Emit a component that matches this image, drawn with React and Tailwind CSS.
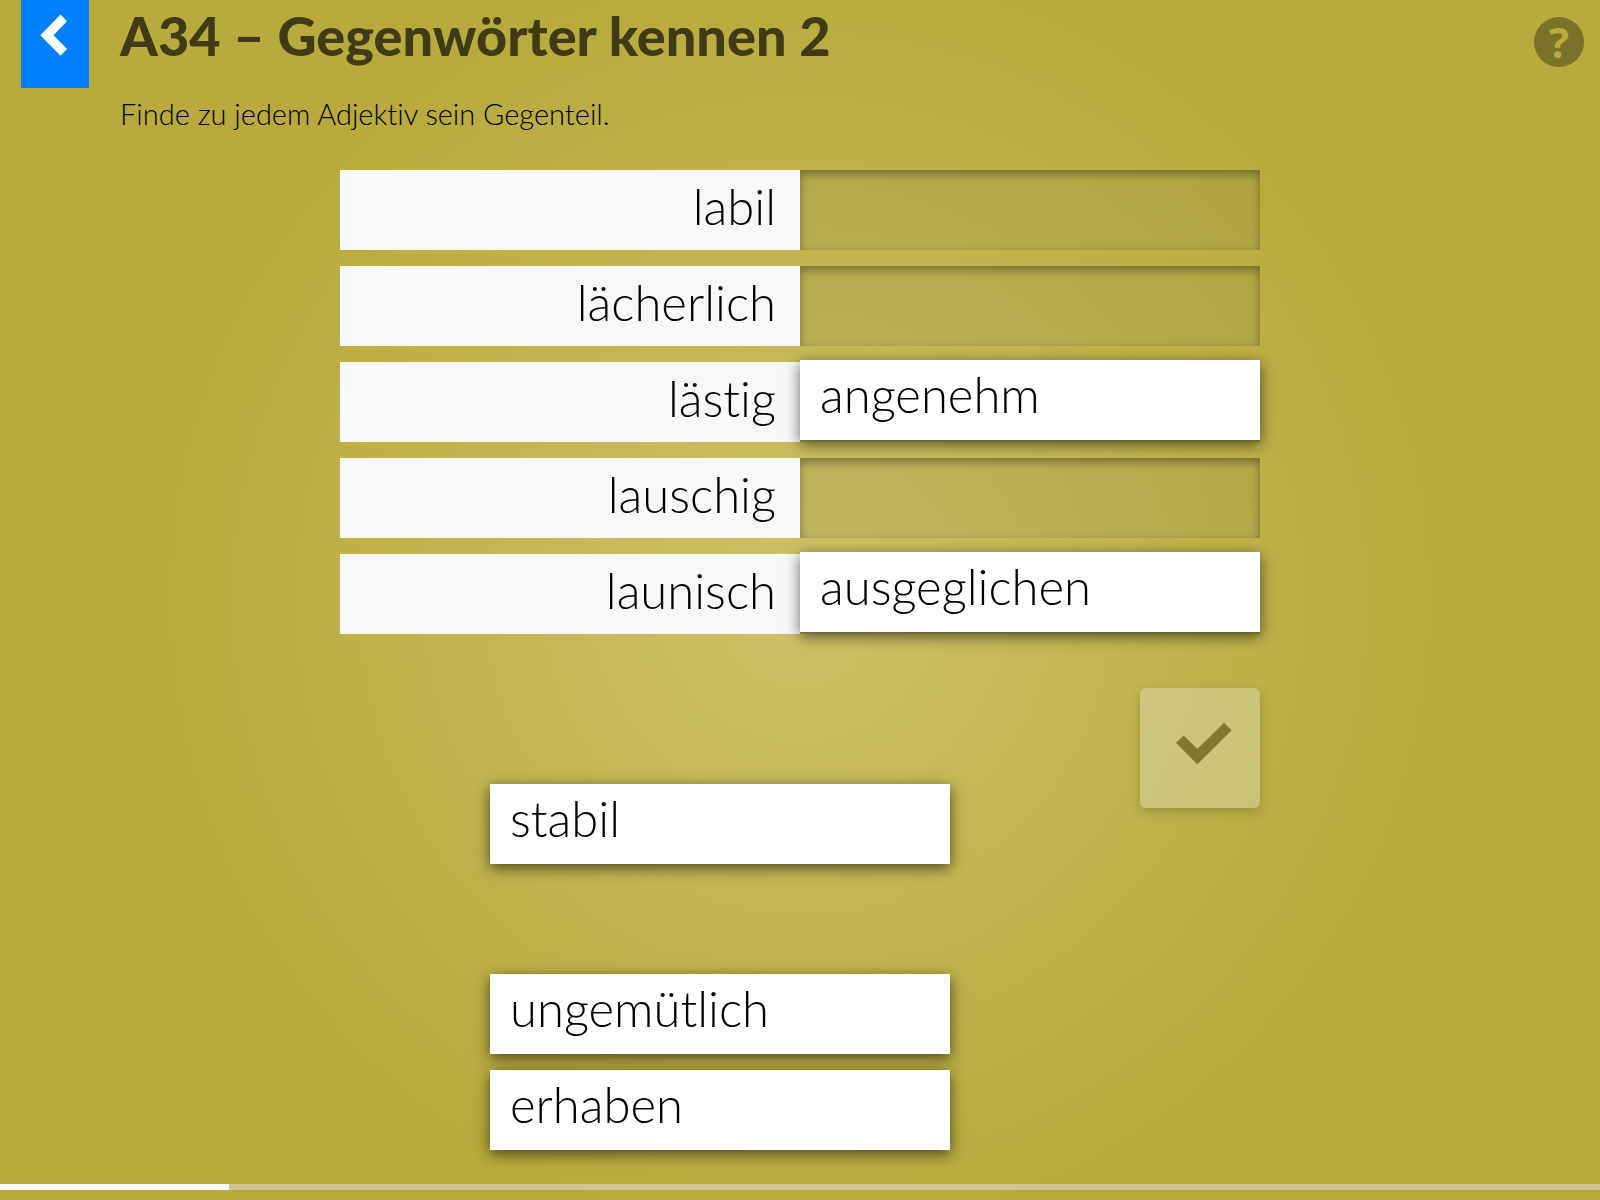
const pairs = [
  { word: 'labil', answer: '' },
  { word: 'lächerlich', answer: '' },
  { word: 'lästig', answer: 'angenehm' },
  { word: 'lauschig', answer: '' },
  { word: 'launisch', answer: 'ausgeglichen' },
];

function Card({ children, className = '' }) {
  return (
    <button
      type="button"
      className={`relative block h-20 w-full cursor-grab bg-white px-5 pb-3 text-left text-[49px] leading-none font-light text-black shadow-[0_4px_14px_rgba(0,0,0,0.6)] ${className}`}
    >
      {children}
    </button>
  );
}

function PairRow({ word, answer }) {
  return (
    <li className="grid h-20 grid-cols-2">
      <div className="flex items-center justify-end bg-[#f8f8f8] px-6 pb-2 text-[49px] leading-none font-light text-black">
        {word}
      </div>
      <div className="bg-[#808050]/15 shadow-[inset_0_4px_10px_rgba(0,0,0,0.35)]">
        {answer && <Card className="-translate-y-0.5">{answer}</Card>}
      </div>
    </li>
  );
}

export default function App() {
  return (
    <div
      className="flex min-h-screen flex-col bg-[#b8aa3c] bg-[radial-gradient(circle_at_center,#cdc267_0px,#b8aa3c_640px)] font-['Lato',sans-serif] [font-variant-ligatures:none]"
    >
      <header className="flex items-start pr-4 pl-[21px]">
        <button type="button" aria-label="Zurück" className="h-22 w-17 shrink-0 bg-[#0080ff]">
          <svg viewBox="0 0 68 88" className="h-22 w-17" aria-hidden="true">
            <path d="M39.5 14.5 46 21.3 32.5 35.3 46 49 39.5 55.7 19.3 35.3Z" fill="#fff" />
          </svg>
        </button>
        <div className="ml-[31px] grow">
          <h1 className="pt-1 text-[54px] leading-[64px] font-black text-[#403a17]">
            A34 – Gegenwörter kennen 2
          </h1>
          <p className="mt-[26px] text-[29px] leading-10 font-light text-black">
            Finde zu jedem Adjektiv sein Gegenteil.
          </p>
        </div>
        <button
          type="button"
          aria-label="Hilfe"
          className="mt-[17px] flex size-[50px] shrink-0 items-center justify-center rounded-full bg-[#7b7229] font-['Open_Sans',sans-serif] text-[42px] leading-none font-bold text-[#b8aa3c]"
        >
          ?
        </button>
      </header>

      <main className="mx-auto mt-9 w-full max-w-[920px] grow">
        <ul className="flex flex-col gap-4">
          {pairs.map((p) => (
            <PairRow key={p.word} {...p} />
          ))}
        </ul>
        <div className="mt-[54px] flex items-start justify-between pl-[150px]">
          <div className="mt-24 w-1/2 max-w-[460px] grow">
            <Card>stabil</Card>
            <Card className="mt-[110px]">ungemütlich</Card>
            <Card className="mt-4">erhaben</Card>
          </div>
          <button
            type="button"
            aria-label="Prüfen"
            className="size-30 shrink-0 rounded-md bg-[#e3dfc4]/40 shadow-[0_4px_12px_rgba(0,0,0,0.2)]"
          >
            <svg viewBox="0 0 120 120" className="size-30" aria-hidden="true">
              <path d="M36 54.8 43.7 47.5 57.3 61 84 34.7 91.7 42.3 57.3 76.4Z" fill="#817733" />
            </svg>
          </button>
        </div>
      </main>

      <div
        role="progressbar"
        aria-label="Fortschritt"
        aria-valuenow={1}
        aria-valuemin={0}
        aria-valuemax={7}
        className="mb-[10px] h-1.5 bg-[#cdc592]"
      >
        <div className="h-full w-1/7 bg-white" />
      </div>
    </div>
  );
}
